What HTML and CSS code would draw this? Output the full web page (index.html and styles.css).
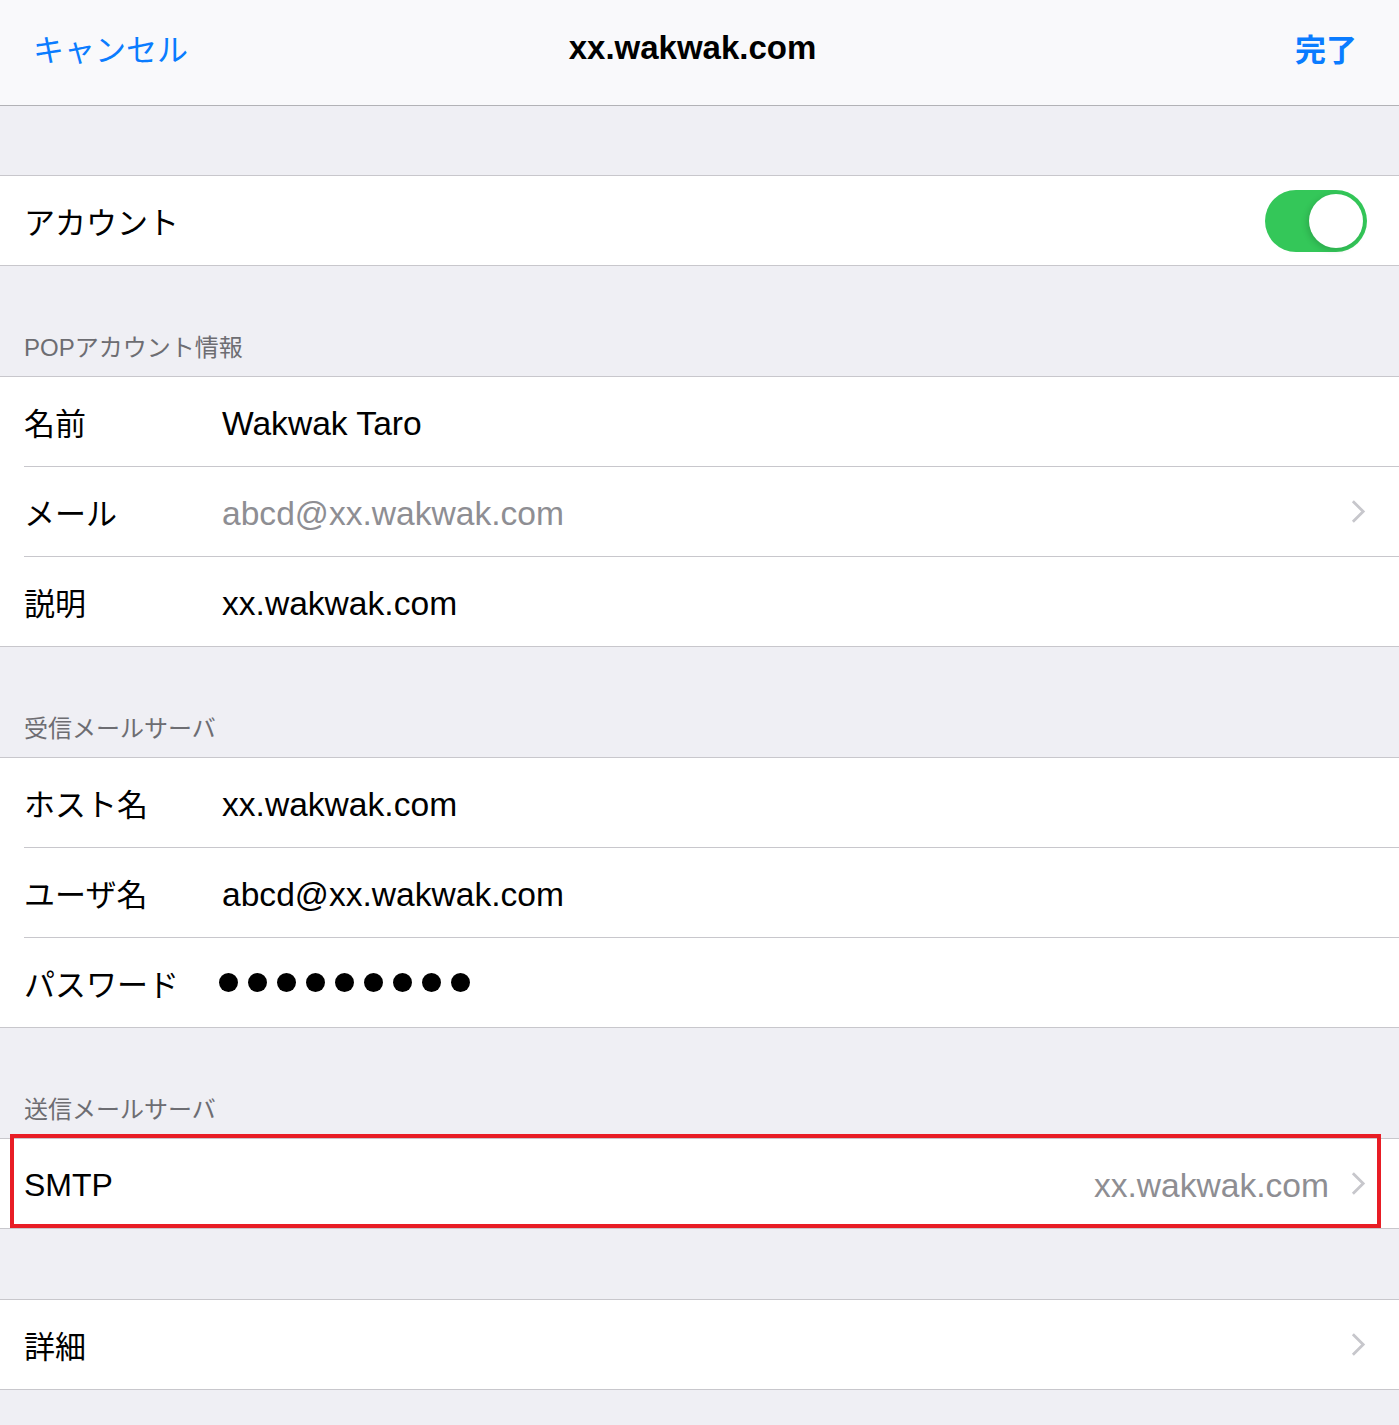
FILE: index.html
```html
<!DOCTYPE html>
<html lang="ja">

<head>
    <meta charset="UTF-8">
    <meta name="viewport" content="width=device-width, initial-scale=1.0">
    <title>xx.wakwak.com</title>
    <link rel="stylesheet" href="styles.css">
</head>

<body>
    <header class="nav-bar">
        <button class="nav-button">キャンセル</button>
        <h1 class="nav-title">xx.wakwak.com</h1>
        <button class="nav-button done">完了</button>
    </header>

    <div class="spacer"></div>

    <ul class="group">
        <li class="row">
            <span class="label">アカウント</span>
            <span class="toggle"><span class="knob"></span></span>
        </li>
    </ul>

    <div class="section-header">POPアカウント情報</div>
    <ul class="group">
        <li class="row">
            <span class="label">名前</span>
            <span class="value">Wakwak Taro</span>
        </li>
        <li class="row">
            <span class="label">メール</span>
            <span class="value muted">abcd@xx.wakwak.com</span>
            <svg class="chevron" viewBox="0 0 16 26"><path d="M2 2 L13 13 L2 24" /></svg>
        </li>
        <li class="row">
            <span class="label">説明</span>
            <span class="value">xx.wakwak.com</span>
        </li>
    </ul>

    <div class="section-header">受信メールサーバ</div>
    <ul class="group">
        <li class="row">
            <span class="label">ホスト名</span>
            <span class="value">xx.wakwak.com</span>
        </li>
        <li class="row">
            <span class="label">ユーザ名</span>
            <span class="value">abcd@xx.wakwak.com</span>
        </li>
        <li class="row">
            <span class="label">パスワード</span>
            <span class="dots">
                <i></i><i></i><i></i><i></i><i></i><i></i><i></i><i></i><i></i>
            </span>
        </li>
    </ul>

    <div class="section-header">送信メールサーバ</div>
    <ul class="group">
        <li class="row highlighted">
            <span class="label latin">SMTP</span>
            <span class="value muted right">xx.wakwak.com</span>
            <svg class="chevron" viewBox="0 0 16 26"><path d="M2 2 L13 13 L2 24" /></svg>
        </li>
    </ul>

    <div class="gap"></div>

    <ul class="group">
        <li class="row">
            <span class="label">詳細</span>
            <span class="value"></span>
            <svg class="chevron" viewBox="0 0 16 26"><path d="M2 2 L13 13 L2 24" /></svg>
        </li>
    </ul>
</body>

</html>
```

FILE: styles.css
```css
body {
    margin: 0;
    padding: 0;
    background-color: #efeff4;
    font-family: "Liberation Sans", "Noto Sans CJK JP", sans-serif;
    color: #000;
}

.nav-bar {
    height: 106px;
    box-sizing: border-box;
    padding: 0 42px 10px 33px;
    display: grid;
    grid-template-columns: 1fr auto 1fr;
    align-items: center;
    background-color: #f9f9fb;
    border-bottom: 1px solid #b2b2b6;
}

.nav-button {
    justify-self: start;
    border: none;
    background: transparent;
    padding: 0;
    color: #0a7cff;
    font-family: "Noto Sans CJK JP", sans-serif;
    font-size: 31px;
    cursor: pointer;
}

.nav-button.done {
    justify-self: end;
    font-weight: bold;
}

.nav-title {
    margin: 0 0 0 -5px;
    font-size: 33px;
    font-weight: bold;
}

.spacer {
    height: 69px;
}

.gap {
    height: 70px;
}

.group {
    list-style: none;
    margin: 0;
    padding: 0;
    background-color: #fff;
    border-top: 1px solid #c8c7cc;
    border-bottom: 1px solid #c8c7cc;
}

.row {
    position: relative;
    height: 89px;
    margin-left: 24px;
    padding-right: 33px;
    display: flex;
    align-items: center;
    border-bottom: 1px solid #c8c7cc;
}

.row:last-child {
    border-bottom: none;
}

.label {
    flex: 0 0 198px;
    font-family: "Noto Sans CJK JP", sans-serif;
    font-size: 31px;
}

.label.latin {
    font-family: "Liberation Sans", sans-serif;
    font-size: 32px;
    padding-top: 3px;
}

.value {
    flex: 1;
    font-size: 33.6px;
    padding-top: 4px;
}

.value.muted {
    color: #8e8e93;
}

.value.right {
    text-align: right;
    margin-right: 22px;
}

.chevron {
    width: 15px;
    height: 25px;
    fill: none;
    stroke: #c7c7cc;
    stroke-width: 3;
}

.toggle {
    margin-left: auto;
    margin-right: -1px;
    position: relative;
    width: 102px;
    height: 62px;
    border-radius: 31px;
    background-color: #34c759;
}

.knob {
    position: absolute;
    top: 4px;
    right: 4px;
    width: 54px;
    height: 54px;
    border-radius: 50%;
    background-color: #fff;
    box-shadow: -2px 2px 6px rgba(0, 0, 0, 0.15);
}

.dots {
    display: flex;
    gap: 10px;
    margin-left: -3px;
    margin-top: 0;
}

.dots i {
    width: 19px;
    height: 19px;
    border-radius: 50%;
    background-color: #000;
}

.section-header {
    height: 110px;
    box-sizing: border-box;
    padding: 0 24px 13px;
    display: flex;
    align-items: flex-end;
    font-family: "Liberation Sans", "Noto Sans CJK JP", sans-serif;
    font-size: 24px;
    color: #6d6d72;
}

.highlighted::after {
    content: "";
    position: absolute;
    left: -14px;
    right: 18px;
    top: -5px;
    bottom: 0;
    border: 4px solid #e81d25;
}
```
